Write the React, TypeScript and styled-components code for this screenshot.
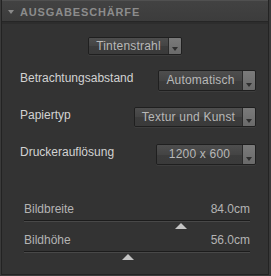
import React from "react";
import styled, { createGlobalStyle } from "styled-components";

const Global = createGlobalStyle`
  html, body { margin: 0; padding: 0; background: #3a3a3a; }
  body { font-family: "Liberation Sans", Arial, sans-serif; }
`;

const Panel = styled.div`
  box-sizing: border-box;
  margin: 0 2px 0 1px;
  width: 268px;
  height: 275px;
  background: #333333;
  border: 1px solid #232323;
  border-top: none;
  display: flex;
  flex-direction: column;
`;

const Header = styled.div`
  box-sizing: border-box;
  height: 22px;
  background: linear-gradient(#424242, #3c3c3c);
  border-top: 1px solid #505050;
  border-bottom: 1px solid #262626;
  display: flex;
  align-items: center;
  padding-left: 6px;
  gap: 6px;
  box-shadow: 0 2px 0 #2d2d2d;
`;

const HeaderArrow = styled.span`
  width: 0;
  height: 0;
  border-left: 3.5px solid transparent;
  border-right: 3.5px solid transparent;
  border-top: 4px solid #8a8a8a;
  margin-top: 1px;
`;

const HeaderTitle = styled.span`
  color: #8c8c8c;
  font-size: 11px;
  font-weight: bold;
  letter-spacing: 0.85px;
  margin-top: 1px;
`;

const Body = styled.div`
  display: flex;
  flex-direction: column;
  padding: 15px 12px 0 18px;
`;

const Center = styled.div`
  display: flex;
  justify-content: center;
  margin-left: -6px;
  margin-bottom: 15px;
`;

const Row = styled.div<{ $gap?: number }>`
  display: flex;
  align-items: center;
  justify-content: space-between;
  height: 20px;
  margin-bottom: ${(p) => p.$gap ?? 17}px;
`;

const Label = styled.span`
  color: #d2d2d2;
  font-size: 12px;
  margin-top: -5px;
`;

const Select = styled.div<{ $w: number; $h: number }>`
  box-sizing: border-box;
  width: ${(p) => p.$w}px;
  height: ${(p) => p.$h}px;
  display: flex;
  border: 1px solid #1f1f1f;
  border-radius: 2px;
  overflow: hidden;
  box-shadow: 0 1px 0 rgba(255, 255, 255, 0.05);
`;

const SelectText = styled.div`
  flex: 1;
  display: flex;
  align-items: center;
  justify-content: center;
  background: linear-gradient(#4e4e4e, #444444 50%, #3c3c3c 51%, #3a3a3a);
  color: #b8b8b8;
  font-size: 12px;
  letter-spacing: 0.2px;
`;

const SelectArrow = styled.div<{ $w: number }>`
  width: ${(p) => p.$w}px;
  background: linear-gradient(#7a7a7a, #6a6a6a);
  border-left: 1px solid #2a2a2a;
  display: flex;
  align-items: flex-end;
  justify-content: center;
  padding-bottom: 3px;
  box-sizing: border-box;
`;

const Tri = styled.span`
  width: 0;
  height: 0;
  border-left: 3.5px solid transparent;
  border-right: 3.5px solid transparent;
  border-top: 4px solid #2e2e2e;
`;

const Sliders = styled.div`
  display: flex;
  flex-direction: column;
  padding: 0 6px 0 4px;
  margin-top: 38px;
`;

const SliderBlock = styled.div`
  display: flex;
  flex-direction: column;
  margin-bottom: 2px;
`;

const SliderHead = styled.div`
  display: flex;
  justify-content: space-between;
  color: #b4b4b4;
  font-size: 12px;
  height: 14px;
  line-height: 14px;
`;

const Track = styled.div`
  margin-top: 4px;
  height: 1px;
  background: #1c1c1c;
  border-bottom: 1px solid #484848;
  position: relative;
  margin-bottom: 9px;
`;

const Thumb = styled.span`
  position: absolute;
  top: 3px;
  width: 0;
  height: 0;
  border-left: 6px solid transparent;
  border-right: 6px solid transparent;
  border-bottom: 6px solid #c4c4c4;
  transform: translateX(-6px);
`;

type SelectProps = { text: string; w: number; h: number; aw: number };
const Dropdown = ({ text, w, h, aw }: SelectProps) => (
  <Select $w={w} $h={h}>
    <SelectText>{text}</SelectText>
    <SelectArrow $w={aw}>
      <Tri />
    </SelectArrow>
  </Select>
);

const sliders = [
  { label: "Bildbreite", value: "84.0cm", pos: 157 },
  { label: "Bildhöhe", value: "56.0cm", pos: 104 },
];

export default function App() {
  return (
    <>
      <Global />
      <Panel>
        <Header>
          <HeaderArrow />
          <HeaderTitle>AUSGABESCHÄRFE</HeaderTitle>
        </Header>
        <Body>
          <Center>
            <Dropdown text="Tintenstrahl" w={94} h={18} aw={13} />
          </Center>
          <Row>
            <Label>Betrachtungsabstand</Label>
            <Dropdown text="Automatisch" w={98} h={21} aw={13} />
          </Row>
          <Row>
            <Label>Papiertyp</Label>
            <Dropdown text="Textur und Kunst" w={122} h={20} aw={13} />
          </Row>
          <Row $gap={0}>
            <Label>Druckerauflösung</Label>
            <Dropdown text="1200 x 600" w={100} h={21} aw={13} />
          </Row>
          <Sliders>
            {sliders.map((s) => (
              <SliderBlock key={s.label}>
                <SliderHead>
                  <span>{s.label}</span>
                  <span>{s.value}</span>
                </SliderHead>
                <Track>
                  <Thumb style={{ left: s.pos }} />
                </Track>
              </SliderBlock>
            ))}
          </Sliders>
        </Body>
      </Panel>
    </>
  );
}
